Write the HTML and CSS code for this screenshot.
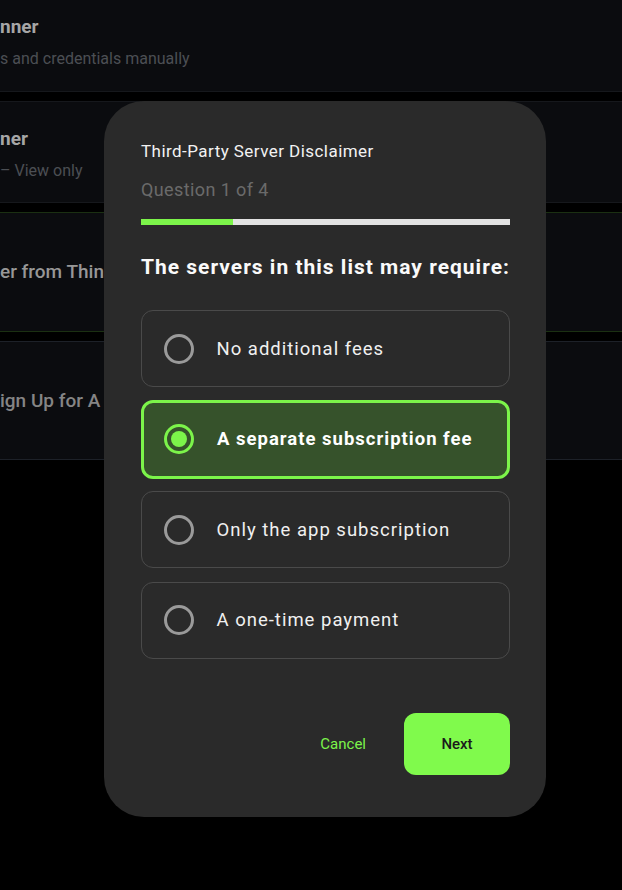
FILE: index.html
```html
<!DOCTYPE html>
<html lang="en">
<head>
<meta charset="utf-8">
<title>Third-Party Server Disclaimer</title>
<link rel="stylesheet" href="styles.css">
</head>
<body>
<div class="list">
  <div class="card card-1">
    <div class="card-title">nner</div>
    <div class="card-sub">s and credentials manually</div>
  </div>
  <div class="card card-2">
    <div class="card-title">ner</div>
    <div class="card-sub">– View only</div>
  </div>
  <div class="card card-3">
    <div class="card-title dim">er from Thin</div>
  </div>
  <div class="card card-4">
    <div class="card-title dimmer">ign Up for A</div>
  </div>
</div>

<div class="modal">
  <div class="modal-title">Third-Party Server Disclaimer</div>
  <div class="modal-step">Question 1 of 4</div>
  <div class="progress"><div class="progress-fill" style="width:25%"></div></div>
  <div class="question">The servers in this list may require:</div>
  <div class="options">
    <div class="option"><span class="radio"></span><span class="option-label">No additional fees</span></div>
    <div class="option selected"><span class="radio"><span class="dot"></span></span><span class="option-label">A separate subscription fee</span></div>
    <div class="option"><span class="radio"></span><span class="option-label">Only the app subscription</span></div>
    <div class="option"><span class="radio"></span><span class="option-label">A one-time payment</span></div>
  </div>
  <div class="actions">
    <button class="btn-cancel">Cancel</button>
    <button class="btn-next">Next</button>
  </div>
</div>
</body>
</html>
```

FILE: styles.css
```css
* { box-sizing: border-box; }
html, body { margin: 0; padding: 0; }
body {
  background: #000;
  width: 622px;
  height: 890px;
  overflow: hidden;
  font-family: Roboto, "Liberation Sans", sans-serif;
  position: relative;
}

.list {
  display: flex;
  flex-direction: column;
  gap: 9px;
}
.card {
  background: #0b0c0f;
  border-top: 1px solid #16181c;
  border-bottom: 1px solid #16181c;
}
.card-1 { height: 92px; padding-top: 14px; border-top: none; }
.card-2 { height: 102px; padding-top: 24px; }
.card-3 { height: 120px; padding-top: 46px; border-top-color: #1b3012; border-bottom-color: #1b3012; }
.card-4 { height: 119px; padding-top: 46px; border-top-color: #1d2128; border-bottom-color: #1d2128; }

.card-title {
  color: #a6a6a6;
  font-size: 19px;
  font-weight: 700;
  line-height: 26px;
}
.card-title.dim { color: #979797; font-weight: 500; }
.card-title.dimmer { color: #858585; font-weight: 500; }
.card-sub {
  color: #4c4f54;
  font-size: 16px;
  line-height: 22px;
  margin-top: 8px;
}

.modal {
  position: absolute;
  left: 104px;
  top: 101px;
  width: 442px;
  height: 716px;
  background: #2a2a2a;
  border-radius: 40px;
  padding: 40px 36px 42px 37px;
  display: flex;
  flex-direction: column;
}
.modal-title {
  color: #f2f2f2;
  font-size: 17px;
  line-height: 20px;
  letter-spacing: 0.45px;
}
.modal-step {
  color: #6a6a6a;
  font-size: 18px;
  line-height: 24px;
  margin-top: 17px;
  letter-spacing: 0.4px;
}
.progress {
  margin-top: 17px;
  height: 6px;
  background: #e2e2e2;
}
.progress-fill {
  height: 100%;
  background: #7cf44a;
}
.question {
  color: #fafafa;
  font-size: 21px;
  font-weight: 700;
  line-height: 28px;
  margin-top: 28px;
  letter-spacing: 1px;
  white-space: nowrap;
}
.options {
  margin-top: 29px;
  display: flex;
  flex-direction: column;
  gap: 13.6px;
}
.option {
  height: 77px;
  border: 1.5px solid #4a4a4a;
  border-radius: 12px;
  display: flex;
  align-items: center;
  padding-left: 21.5px;
  gap: 23px;
}
.option.selected {
  border: 3px solid #7cf44a;
  background: #36522b;
  padding-left: 20px;
  height: 79px;
  margin: -1px 0;
}
.radio {
  width: 30px;
  height: 30px;
  border-radius: 50%;
  border: 3px solid #9a9a9a;
  display: flex;
  align-items: center;
  justify-content: center;
  flex: none;
}
.selected .radio { border-color: #7cf44a; }
.dot {
  width: 16px;
  height: 16px;
  border-radius: 50%;
  background: #7cf44a;
}
.option-label {
  color: #f0f0f0;
  font-size: 18.5px;
  letter-spacing: 1px;
}
.selected .option-label {
  font-weight: 700;
  color: #fff;
}
.actions {
  margin-top: auto;
  display: flex;
  justify-content: flex-end;
  align-items: center;
  gap: 18px;
}
.btn-cancel {
  background: none;
  border: none;
  color: #7cf44a;
  font-family: inherit;
  font-size: 15px;
  height: 62px;
  padding: 0 20px;
}
.btn-next {
  background: #80fa4c;
  border: none;
  border-radius: 12px;
  color: #1a1a1a;
  font-family: inherit;
  font-size: 15px;
  font-weight: 500;
  width: 106px;
  height: 62px;
}
```
